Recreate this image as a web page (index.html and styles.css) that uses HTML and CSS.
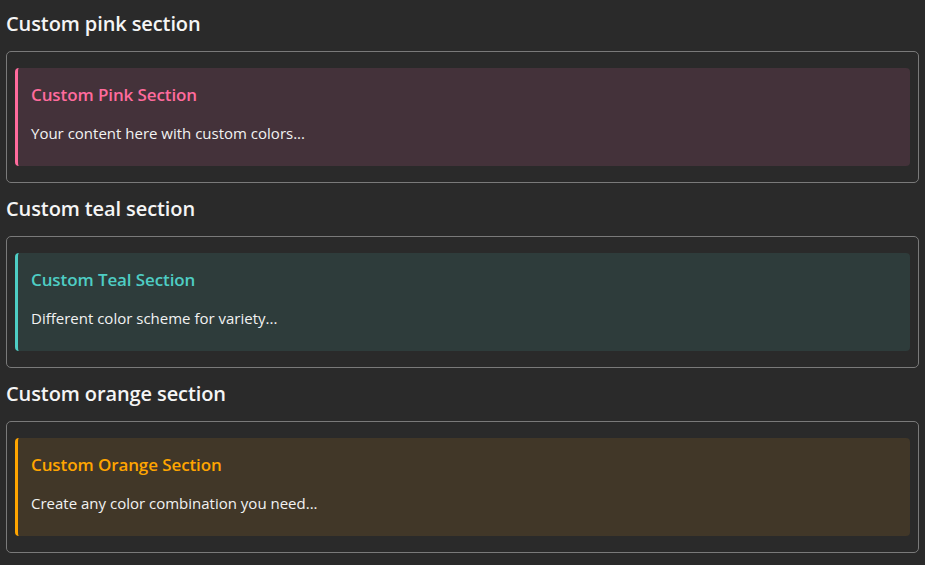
FILE: index.html
```html
<!DOCTYPE html>
<html lang="en">
<head>
<meta charset="utf-8">
<title>Custom sections</title>
<link rel="stylesheet" href="styles.css">
</head>
<body>
<div class="page">
  <h2 class="heading first">Custom pink section</h2>
  <div class="frame">
    <div class="callout pink">
      <div class="callout-title">Custom Pink Section</div>
      <p class="callout-text">Your content here with custom colors...</p>
    </div>
  </div>

  <h2 class="heading">Custom teal section</h2>
  <div class="frame">
    <div class="callout teal">
      <div class="callout-title">Custom Teal Section</div>
      <p class="callout-text">Different color scheme for variety...</p>
    </div>
  </div>

  <h2 class="heading">Custom orange section</h2>
  <div class="frame">
    <div class="callout orange">
      <div class="callout-title">Custom Orange Section</div>
      <p class="callout-text">Create any color combination you need...</p>
    </div>
  </div>
</div>
</body>
</html>
```

FILE: styles.css
```css
html, body {
  margin: 0;
  padding: 0;
  background: #2a2a2a;
}

body {
  font-family: "Open Sans", "Noto Sans", "Liberation Sans", sans-serif;
  color: #f2f2f2;
}

.page {
  padding: 0 6px;
}

.heading {
  font-size: 20px;
  font-weight: 600;
  line-height: 28px;
  margin: 12px 0 13px;
  color: #f5f5f5;
  letter-spacing: -0.1px;
}

.heading.first {
  margin-top: 10px;
}

.frame {
  border: 1px solid #7a7a7a;
  border-radius: 5px;
  padding: 16px 8px;
}

.callout {
  border-left: 3px solid;
  border-radius: 4px;
  padding: 16px 13px 22px;
}

.callout-title {
  font-size: 17px;
  font-weight: 600;
  line-height: 22px;
  margin-bottom: 16px;
  letter-spacing: -0.1px;
}

.callout-text {
  margin: 0;
  font-size: 15px;
  line-height: 22px;
  color: #f2f2f2;
  letter-spacing: 0;
}

.pink {
  border-left-color: #ff6b9d;
  background: #44323a;
}
.pink .callout-title { color: #ff6b9d; }

.teal {
  border-left-color: #4ecdc4;
  background: #2e3c3b;
}
.teal .callout-title { color: #4ecdc4; }

.orange {
  border-left-color: #ffa500;
  background: #413728;
}
.orange .callout-title { color: #ffa500; }
```
